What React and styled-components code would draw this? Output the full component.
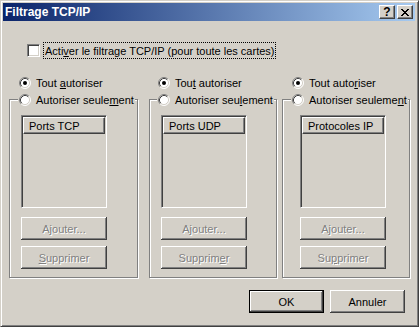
import React from "react";
import styled, { createGlobalStyle } from "styled-components";

const GlobalStyle = createGlobalStyle`
  html, body {
    margin: 0;
    padding: 0;
    background: #d4d0c8;
  }
  body {
    font-family: "Liberation Sans", Arial, sans-serif;
    font-size: 11px;
    color: #000;
  }
`;

const columns = [
  {
    header: "Ports TCP",
    width: 129,
    offset: 0,
    indent: 10,
    inset: 12,
    all: ["Tout ", "a", "utoriser"],
    only: ["Autoriser seule", "m", "ent"],
    remove: ["", "S", "upprimer"],
  },
  {
    header: "Ports UDP",
    width: 128,
    offset: 11,
    indent: 9,
    inset: 12,
    all: ["Tou", "t", " autoriser"],
    only: ["Autoriser seu", "l", "ement"],
    remove: ["Supprim", "e", "r"],
  },
  {
    header: "Protocoles IP",
    width: 128,
    offset: 5,
    indent: 10,
    inset: 18,
    all: ["Tout auto", "r", "iser"],
    only: ["Autoriser seuleme", "n", "t"],
    remove: ["Su", "p", "primer"],
  },
];

const Mnemonic = ({ parts }) => (
  <>
    {parts[0]}
    <U>{parts[1]}</U>
    {parts[2]}
  </>
);

const Radio = ({ checked }) => (
  <RadioIcon width="12" height="12" viewBox="0 0 12 12">
    <circle cx="6" cy="6" r="5" fill="#fff" />
    <path d="M2.11 9.89 A5.5 5.5 0 0 1 9.89 2.11" stroke="#808080" fill="none" />
    <path d="M9.89 2.11 A5.5 5.5 0 0 1 2.11 9.89" stroke="#fff" fill="none" />
    <path d="M2.82 9.18 A4.5 4.5 0 0 1 9.18 2.82" stroke="#404040" fill="none" />
    <path d="M9.18 2.82 A4.5 4.5 0 0 1 2.82 9.18" stroke="#d4d0c8" fill="none" />
    {checked && <circle cx="6" cy="6" r="2" fill="#000" />}
  </RadioIcon>
);

const CloseGlyph = () => (
  <svg width="8" height="7" viewBox="0 0 8 7" shapeRendering="crispEdges">
    <path
      fill="#000"
      d="M0 0h2v1H0zM6 0h2v1H6zM1 1h2v1H1zM5 1h2v1H5zM2 2h4v1H2zM3 3h2v1H3zM2 4h4v1H2zM1 5h2v1H1zM5 5h2v1H5zM0 6h2v1H0zM6 6h2v1H6z"
    />
  </svg>
);

const FilterColumn = ({ col }) => (
  <Column $width={col.width} $offset={col.offset}>
    <RadioRow $indent={col.indent}>
      <Radio checked />
      <span>
        <Mnemonic parts={col.all} />
      </span>
    </RadioRow>
    <Group>
      <Legend $indent={col.indent}>
        <Radio />
        <span>
          <Mnemonic parts={col.only} />
        </span>
      </Legend>
      <GroupBody $inset={col.inset}>
        <ListBox>
          <ListHeader>{col.header}</ListHeader>
        </ListBox>
        <ButtonStack>
          <PushButton disabled>Ajouter...</PushButton>
          <PushButton disabled>
            <Mnemonic parts={col.remove} />
          </PushButton>
        </ButtonStack>
      </GroupBody>
    </Group>
  </Column>
);

export default function App() {
  return (
    <>
      <GlobalStyle />
      <Window>
        <TitleBar>
          <Title>Filtrage TCP/IP</Title>
          <CaptionButton>?</CaptionButton>
          <CaptionButton>
            <CloseGlyph />
          </CaptionButton>
        </TitleBar>
        <CheckRow>
          <CheckBox />
          <FocusLabel>
            <Mnemonic parts={["Acti", "v", "er le filtrage TCP/IP (pour toute les cartes)"]} />
          </FocusLabel>
        </CheckRow>
        <Columns>
          {columns.map((col) => (
            <FilterColumn key={col.header} col={col} />
          ))}
        </Columns>
        <Footer>
          <PushButton $default $wide>OK</PushButton>
          <PushButton $wide>Annuler</PushButton>
        </Footer>
      </Window>
    </>
  );
}

const Window = styled.div`
  box-sizing: border-box;
  width: 419px;
  height: 327px;
  display: flex;
  flex-direction: column;
  padding: 2px 3px 2px 2px;
  background: #d4d0c8;
  border: 1px solid;
  border-color: #d4d0c8 #404040 #404040 #d4d0c8;
  box-shadow: inset 1px 1px #fff, inset -1px -1px #808080;
`;

const TitleBar = styled.div`
  height: 18px;
  display: flex;
  align-items: center;
  gap: 2px;
  padding: 0 2px;
  background: linear-gradient(to right, #0a246a, #a6caf0);
`;

const Title = styled.span`
  flex: 1;
  color: #fff;
  font-weight: bold;
  font-size: 12px;
`;

const CaptionButton = styled.div`
  box-sizing: border-box;
  width: 16px;
  height: 14px;
  display: flex;
  align-items: center;
  justify-content: center;
  background: #d4d0c8;
  border: 1px solid;
  border-color: #fff #404040 #404040 #fff;
  box-shadow: inset -1px -1px #808080, inset 1px 1px #d4d0c8;
  font-weight: bold;
  font-size: 12px;
  line-height: 1;
`;

const CheckRow = styled.div`
  display: flex;
  align-items: center;
  height: 17px;
  margin-top: 21px;
  padding-left: 24px;
`;

const CheckBox = styled.span`
  box-sizing: border-box;
  width: 13px;
  height: 13px;
  background: #fff;
  border: 1px solid;
  border-color: #808080 #fff #fff #808080;
  box-shadow: inset 1px 1px #404040, inset -1px -1px #d4d0c8;
`;

const FocusLabel = styled.span`
  box-sizing: border-box;
  height: 17px;
  display: flex;
  align-items: center;
  margin-left: 3px;
  padding: 0 1px;
  border: 1px dotted #000;
  white-space: nowrap;
`;

const U = styled.span`
  text-decoration: underline;
`;

const Columns = styled.div`
  display: flex;
  margin-top: 16px;
  padding-left: 6px;
`;

const Column = styled.div`
  width: ${(p) => p.$width}px;
  margin-left: ${(p) => p.$offset}px;
  display: flex;
  flex-direction: column;
`;

const RadioIcon = styled.svg`
  flex-shrink: 0;
  display: block;
`;

const RadioRow = styled.div`
  height: 16px;
  display: flex;
  align-items: center;
  gap: 5px;
  padding-left: ${(p) => p.$indent}px;
  white-space: nowrap;
`;

const Group = styled.fieldset`
  box-sizing: border-box;
  min-width: 0;
  margin: 2px 0 0;
  padding: 0;
  border: 1px solid #808080;
  box-shadow: 1px 1px #fff, inset 1px 1px #fff;
`;

const Legend = styled.legend`
  height: 13px;
  display: flex;
  align-items: center;
  gap: 5px;
  margin-left: ${(p) => p.$indent - 2}px;
  padding: 0 1px;
  background: #d4d0c8;
  white-space: nowrap;
`;

const GroupBody = styled.div`
  display: flex;
  flex-direction: column;
  padding: 9px 0 8px ${(p) => p.$inset - 1}px;
`;

const ListBox = styled.div`
  box-sizing: border-box;
  width: 86px;
  height: 93px;
  padding: 1px;
  background: #d4d0c8;
  border: 1px solid;
  border-color: #808080 #fff #fff #808080;
  box-shadow: inset 1px 1px #404040, inset -1px -1px #d4d0c8;
`;

const ListHeader = styled.div`
  box-sizing: border-box;
  height: 17px;
  display: flex;
  align-items: center;
  padding-left: 5px;
  border: 1px solid;
  border-color: #fff #404040 #404040 #fff;
  box-shadow: inset -1px -1px #808080;
  white-space: nowrap;
`;

const ButtonStack = styled.div`
  display: flex;
  flex-direction: column;
  gap: 6px;
  margin-top: 9px;
`;

const PushButton = styled.button`
  box-sizing: border-box;
  width: ${(p) => (p.$wide ? 75 : 86)}px;
  height: 23px;
  padding: 0;
  margin: 0;
  font: inherit;
  color: #000;
  background: #d4d0c8;
  border: none;
  box-shadow: ${(p) =>
    p.$default
      ? "inset 0 0 0 1px #000, inset -2px -2px #404040, inset 2px 2px #fff, inset -3px -3px #808080"
      : "inset -1px -1px #404040, inset 1px 1px #fff, inset -2px -2px #808080"};

  &:disabled {
    color: #808080;
    text-shadow: 1px 1px 0 #fff;
  }
`;

const Footer = styled.div`
  display: flex;
  justify-content: flex-end;
  gap: 6px;
  margin-top: 12px;
  padding-right: 10px;
`;
